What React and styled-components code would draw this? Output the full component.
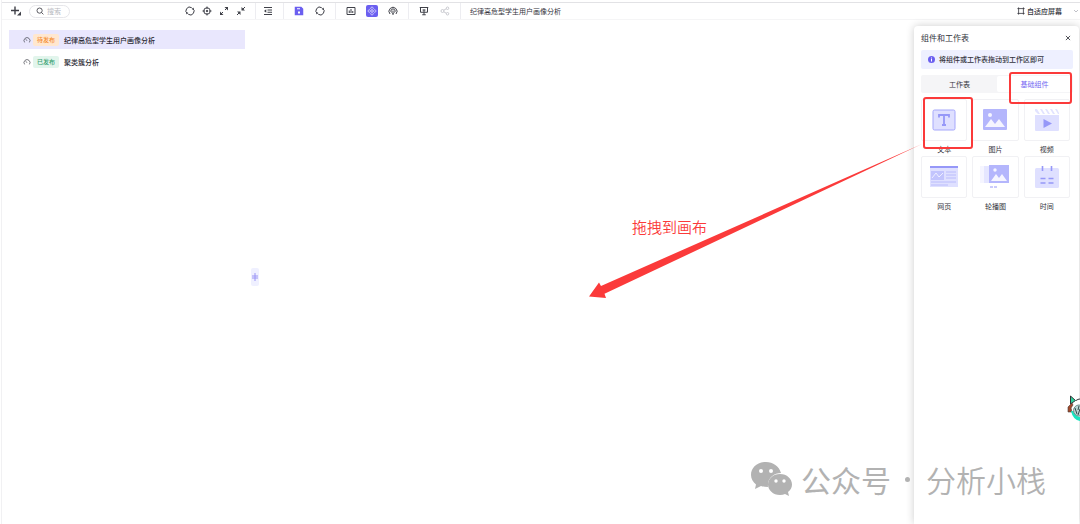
import React from 'react';
import styled, { createGlobalStyle } from 'styled-components';

const GlobalStyle = createGlobalStyle`
  * {
    box-sizing: border-box;
  }

  body {
    margin: 0;
    background: #fff;
    color: #33343c;
    font-family: 'Noto Sans CJK SC', sans-serif;
    font-size: 7px;
    line-height: 10px;
  }

  button,
  input {
    margin: 0;
    padding: 0;
    border: none;
    background: none;
    color: inherit;
    font: inherit;
  }

  svg {
    display: block;
    flex: none;
  }
`;

const Page = styled.div`
  position: relative;
  display: flex;
  flex-direction: column;
  min-height: 100vh;
  margin-left: 1px;
  border-left: 1px solid #f1f1f3;
  padding-top: 2px;
  overflow: hidden;
`;

const Toolbar = styled.header`
  display: flex;
  align-items: center;
  height: 18px;
  border-top: 1px solid #e2e2e5;
  border-bottom: 1px solid #f5f5f6;
`;

const ToolbarStart = styled.div`
  display: flex;
  align-items: center;
  width: 253px;
  padding: 0 8px;
`;

const ToolGroup = styled.div`
  display: flex;
  align-items: center;
  gap: ${({ $gap }) => $gap || 9}px;
  padding: 0 9px 0 ${({ $start }) => $start || 9}px;
  height: 16px;
  border-left: 1px solid #ededf1;
`;

const ToolButton = styled.button`
  display: flex;
  align-items: center;
  justify-content: center;
  width: 12px;
  height: 12px;
  border-radius: 2px;
  color: ${({ $muted }) => ($muted ? '#c9cad0' : '#3f4048')};
  background: ${({ $active }) => ($active ? '#6b5ff0' : 'transparent')};
`;

const QuickTools = styled.div`
  display: flex;
  gap: 5px;
  margin-left: auto;
`;

const SearchBox = styled.label`
  display: flex;
  align-items: center;
  gap: 3px;
  width: 41px;
  height: 13px;
  margin-left: 7px;
  padding-left: 6px;
  border: 1px solid #e6e6ea;
  border-radius: 7px;
`;

const SearchInput = styled.input`
  width: 24px;
  height: 10px;
  outline: none;

  &::placeholder {
    color: #b9bac1;
    opacity: 1;
  }
`;

const ScreenMode = styled.button`
  display: flex;
  align-items: center;
  gap: 2px;
  margin-left: auto;
  font-weight: 500;
`;

const ModeArrow = styled.span`
  margin-left: 8px;
  color: #c0c1c8;
`;

const Workspace = styled.div`
  display: flex;
  flex: 1;
`;

const Sidebar = styled.nav`
  display: flex;
  flex-direction: column;
  gap: 3px;
  width: 249px;
  padding: 10px 6px 0 7px;
`;

const SidebarRow = styled.a`
  display: flex;
  align-items: center;
  width: 236px;
  height: 19px;
  padding-left: 14px;
  color: #292a33;
  font-weight: 500;
  text-decoration: none;
  background: ${({ $selected }) => ($selected ? '#e9e7fd' : 'transparent')};
`;

const Badge = styled.span`
  width: 26px;
  height: 12px;
  margin: 0 5px 0 2px;
  border-radius: 2px;
  font-size: 6px;
  line-height: 12px;
  text-align: center;
  color: ${({ $published }) => ($published ? '#35a070' : '#f58b2e')};
  background: ${({ $published }) => ($published ? '#e2f5ec' : '#ffe7cf')};
`;

const Handle = styled.button`
  display: flex;
  align-items: center;
  justify-content: center;
  align-self: center;
  width: 8px;
  height: 18px;
  margin-top: 9px;
  border-radius: 2px;
  background: #eff0ff;
`;

const Canvas = styled.main`
  position: relative;
  flex: 1;
`;

const Panel = styled.aside`
  width: 165px;
  margin: 6px 1px 0 0;
  padding: 6px 6px 0 7px;
  border-radius: 4px 4px 0 0;
  background: #fff;
  box-shadow: 0 0 9px rgba(0, 0, 0, 0.2);
`;

const PanelHeader = styled.div`
  display: flex;
  align-items: center;
  justify-content: space-between;
  height: 12px;
  padding-right: 2px;
`;

const PanelTitle = styled.h2`
  margin: 0;
  font-size: 8px;
  font-weight: 400;
  line-height: 12px;
`;

const Notice = styled.p`
  display: flex;
  align-items: center;
  gap: 4px;
  height: 19px;
  margin: 6px 0;
  padding: 0 0 1px 7px;
  border-radius: 2px;
  background: #eef0ff;
  font-weight: 500;
`;

const Tabs = styled.div`
  display: flex;
  height: 18px;
  padding: 1px;
  border-radius: 2px;
  background: #f5f5f7;
`;

const Tab = styled.button`
  position: relative;
  flex: 1;
  border-radius: 2px;
  color: ${({ $active }) => ($active ? '#7468f2' : 'inherit')};
  background: ${({ $active }) => ($active ? '#fff' : 'transparent')};
`;

const ComponentGrid = styled.div`
  display: grid;
  grid-template-columns: repeat(3, 1fr);
  gap: 2px 5px;
  padding: 6px 3px 0 0;
`;

const ComponentItem = styled.button`
  position: relative;
  display: flex;
  flex-direction: column;
  height: 55px;
`;

const Thumb = styled.span`
  display: flex;
  align-items: center;
  justify-content: center;
  width: 100%;
  height: 42px;
  border: 1px solid #f1f1f4;
  border-radius: 2px;
`;

const ItemLabel = styled.span`
  width: 100%;
  margin-top: 3px;
  text-align: center;
`;

const Highlight = styled.span`
  position: absolute;
  inset: ${({ $inset }) => $inset};
  z-index: 1;
  border: 2px solid #fb3a3a;
  border-radius: 3px;
`;

const ArrowDrawing = styled.svg`
  position: absolute;
  top: 121px;
  right: -10px;
  z-index: 1;
  pointer-events: none;
`;

const ArrowText = styled.span`
  position: absolute;
  top: 196px;
  right: 207px;
  color: #fb3a3a;
  font-size: 15px;
  font-weight: 350;
  line-height: 22px;
`;

const Watermark = styled.div`
  position: absolute;
  right: 34px;
  bottom: 24px;
  z-index: 2;
  display: flex;
  align-items: center;
  gap: 8px;
  color: #b2b2b2;
  font-size: 30px;
  line-height: 42px;
  white-space: nowrap;
  pointer-events: none;
`;

const WatermarkDot = styled.span`
  width: 5px;
  height: 5px;
  margin: 0 8px 0 6px;
  border-radius: 50%;
  background: #b2b2b2;
`;

const WatermarkName = styled.span`
  font-weight: 350;
`;

const Mascot = styled.svg`
  position: absolute;
  right: 0;
  bottom: 101px;
  z-index: 2;
`;

const Icon = ({ size = 10, children }) => (
  <svg
    width={size}
    height={size}
    viewBox="0 0 20 20"
    fill="none"
    stroke="currentColor"
    strokeWidth="2"
    aria-hidden="true"
  >
    {children}
  </svg>
);

const icons = {
  add: (
    <>
      <path d="M8 1v16M0 9h16" strokeWidth="2.8" />
      <path d="M20 11v8h-8z" fill="currentColor" stroke="none" />
    </>
  ),
  refresh: (
    <>
      <path d="M5 15.500A7.300 7.300 0 0 1 13.500 3.500M15 4.500A7.300 7.300 0 0 1 6.500 16.500" />
      <path d="M17.500 3v4h-4zM2.500 17v-4h4z" fill="currentColor" stroke="none" />
    </>
  ),
  target: (
    <>
      <circle cx="10" cy="10" r="6.500" />
      <circle cx="10" cy="10" r="1.500" fill="currentColor" />
      <path d="M10 1v5M10 14v5M1 10h5M14 10h5" />
    </>
  ),
  expand: (
    <>
      <path d="M12 8l4-4M8 12l-4 4" />
      <path d="M11 2h7v7zM9 18H2v-7z" fill="currentColor" stroke="none" />
    </>
  ),
  shrink: (
    <>
      <path d="M18 2l-4 4M2 18l4-4" />
      <path d="M11 2v7h7zM9 18v-7H2z" fill="currentColor" stroke="none" />
    </>
  ),
  indent: (
    <>
      <path d="M2 3h16M9 8h9M9 12.500h9M2 17h16" />
      <path d="M6.500 6.500v7l-4.500-3.500z" fill="currentColor" stroke="none" />
    </>
  ),
  save: (
    <>
      <path d="M3 3h11l3 3v11H3z" fill="#6b5ff0" stroke="#6b5ff0" strokeWidth="3" />
      <path d="M6 5.500h6" stroke="#fff" />
      <path d="M8 11h4v4H8z" fill="#fff" stroke="none" />
    </>
  ),
  chart: <path d="M2 3h16v14H2zM6.500 9v5M10 6v8M13.500 10v4" />,
  widgets: (
    <g stroke="#fff" strokeWidth="1.300">
      <path d="M10 1.500l3 3-3 3-3-3zM10 12.500l3 3-3 3-3-3zM4.500 7l3 3-3 3-3-3zM15.500 7l3 3-3 3-3-3z" />
      <circle cx="10" cy="10" r="1" />
    </g>
  ),
  gauge: (
    <>
      <path d="M4 16a8 8 0 1 1 12 0M7 13a4.200 4.200 0 1 1 6 0" />
      <path d="M10 9v7M8 16h4" />
    </>
  ),
  board: <path d="M1.500 3h17M3 3v9.500h14V3M10 7v10.500M6.500 17.500h7M7 8h6" />,
  share: (
    <>
      <circle cx="5" cy="10" r="3" />
      <circle cx="15" cy="4.500" r="2.500" />
      <circle cx="15" cy="15.500" r="2.500" />
      <path d="M7.500 8.500l5-3M7.500 11.500l5 3" />
    </>
  ),
  search: (
    <>
      <circle cx="9" cy="9" r="6.500" />
      <path d="M14 14l4.500 4.500" />
    </>
  ),
  dial: <path d="M4 16a7.500 7.500 0 1 1 12 0M10 12l-3-4" strokeWidth="1.500" />,
  frame: <path d="M4 1v18M16 1v18M1 4h18M1 16h18" />,
  close: <path d="M3 3l14 14M17 3L3 17" strokeWidth="2.800" />,
};

const TextArt = () => (
  <svg width="24" height="22" viewBox="0 0 24 22">
    <rect x="1" y="1" width="22" height="20" rx="1.500" fill="#dfe0ff" stroke="#a5a7fb" />
    <path d="M7 8.500V6h10v2.500M12 6v10M10 16h4" fill="none" stroke="#9698f8" strokeWidth="1.800" />
  </svg>
);

const ImageArt = () => (
  <svg width="26" height="22" viewBox="0 0 26 22">
    <rect x="1" y="0" width="24" height="21" rx="1" fill="#b4b6fc" />
    <circle cx="8" cy="6" r="2" fill="#f5f5ff" />
    <path d="M3 18l6-8 4 5 4-5 6 8z" fill="#f5f5ff" />
  </svg>
);

const VideoArt = () => (
  <svg width="26" height="22" viewBox="0 0 26 22">
    <path d="M1 6h24v15a1 1 0 0 1-1 1H2a1 1 0 0 1-1-1z" fill="#dfe0ff" />
    <path d="M1 0h2l3 5H4L1 2zM6 0h2l3 5H9zM11 0h2l3 5h-2zM16 0h2l3 5h-2zM21 0h2l2 4v1h-1z" fill="#e2e3ff" />
    <path d="M9.500 10v9L18 14.500z" fill="#9698f8" />
  </svg>
);

const WebArt = () => (
  <svg width="30" height="22" viewBox="0 0 30 22">
    <path d="M1 0h28v21H1z" fill="#dfe0ff" />
    <path d="M1 0h28v2H1z" fill="#9698f8" />
    <path d="M2 5h13v9H2z" fill="#c2c4fd" />
    <path d="M3 12l4-5 3 4 4-4" stroke="#eeeeff" fill="none" />
    <path d="M17 6h10M17 9h10M17 12h10M2 16h25M2 19h17" stroke="#babcfc" />
  </svg>
);

const CarouselArt = () => (
  <svg width="30" height="24" viewBox="0 0 30 24">
    <path d="M0 1h5v17H0z" fill="#f5f5ff" />
    <path d="M4 1h7v17H4z" fill="#e5e6ff" />
    <path d="M9 0h20v18H9z" fill="#b4b6fc" />
    <circle cx="15" cy="5" r="1.700" fill="#f5f5ff" />
    <path d="M11 16l5-7 3 4 3-4 5 7z" fill="#f5f5ff" />
    <path d="M10 22h7" stroke="#9698f8" strokeDasharray="3 1" />
  </svg>
);

const TimeArt = () => (
  <svg width="26" height="24" viewBox="0 0 26 24">
    <rect x="1" y="3" width="24" height="20" rx="1.500" fill="#dfe0ff" />
    <path d="M8.500 1v5M17.500 1v5M6.500 13.500h5M14.500 13.500h5M6.500 18h5M14.500 18h5" stroke="#9698f8" strokeWidth="1.600" />
  </svg>
);

const components = [
  { label: '文本', Art: TextArt, marked: true },
  { label: '图片', Art: ImageArt },
  { label: '视频', Art: VideoArt },
  { label: '网页', Art: WebArt },
  { label: '轮播图', Art: CarouselArt },
  { label: '时间', Art: TimeArt },
];

const Tool = ({ name, label, ...rest }) => (
  <ToolButton type="button" aria-label={label} {...rest}>
    <Icon>{icons[name]}</Icon>
  </ToolButton>
);

const Header = () => (
  <Toolbar>
    <ToolbarStart>
      <Tool name="add" label="新建" />
      <SearchBox>
        <Icon size={8}>{icons.search}</Icon>
        <SearchInput placeholder="搜索" aria-label="搜索" />
      </SearchBox>
      <QuickTools>
        <Tool name="refresh" label="刷新" />
        <Tool name="target" label="定位" />
        <Tool name="expand" label="展开" />
        <Tool name="shrink" label="收起" />
      </QuickTools>
    </ToolbarStart>
    <ToolGroup $start={6}>
      <Tool name="indent" label="目录" />
    </ToolGroup>
    <ToolGroup>
      <Tool name="save" label="保存" />
      <Tool name="refresh" label="重新加载" />
    </ToolGroup>
    <ToolGroup>
      <Tool name="chart" label="图表" />
      <Tool name="widgets" label="组件" $active />
      <Tool name="gauge" label="仪表" />
    </ToolGroup>
    <ToolGroup>
      <Tool name="board" label="预览" />
      <Tool name="share" label="分享" $muted />
    </ToolGroup>
    <ToolGroup>纪律高危型学生用户画像分析</ToolGroup>
    <ScreenMode type="button">
      <Icon size={8}>{icons.frame}</Icon>
      自适应屏幕
      <ModeArrow>
        <svg width="8" height="6" viewBox="0 0 8 6">
          <path d="M2 2l2 2 2-2" fill="none" stroke="currentColor" />
        </svg>
      </ModeArrow>
    </ScreenMode>
  </Toolbar>
);

const Pages = () => (
  <Sidebar>
    <SidebarRow href="#risk" $selected>
      <Icon size={8}>{icons.dial}</Icon>
      <Badge>待发布</Badge>
      纪律高危型学生用户画像分析
    </SidebarRow>
    <SidebarRow href="#cluster">
      <Icon size={8}>{icons.dial}</Icon>
      <Badge $published>已发布</Badge>
      聚类簇分析
    </SidebarRow>
  </Sidebar>
);

const ComponentPanel = () => (
  <Panel>
    <PanelHeader>
      <PanelTitle>组件和工作表</PanelTitle>
      <button type="button" aria-label="关闭">
        <Icon size={6}>{icons.close}</Icon>
      </button>
    </PanelHeader>
    <Notice>
      <svg width="7" height="7" viewBox="0 0 14 14">
        <circle cx="7" cy="7" r="7" fill="#6b5ff0" />
        <path d="M7 3v2M7 6v5" stroke="#fff" strokeWidth="2" />
      </svg>
      将组件或工作表拖动到工作区即可
    </Notice>
    <Tabs role="tablist">
      <Tab type="button" role="tab" aria-selected="false">工作表</Tab>
      <Tab type="button" role="tab" aria-selected="true" $active>
        基础组件
        <Highlight $inset="-4px 0 -12px 12px" />
      </Tab>
    </Tabs>
    <ComponentGrid>
      {components.map(({ label, Art, marked }) => (
        <ComponentItem type="button" key={label}>
          <Thumb>
            <Art />
          </Thumb>
          <ItemLabel>{label}</ItemLabel>
          {marked && <Highlight $inset="-2px -6px 5px 2px" />}
        </ComponentItem>
      ))}
    </ComponentGrid>
  </Panel>
);

const App = () => (
  <>
    <GlobalStyle />
    <Page>
      <Header />
      <Workspace>
        <Pages />
        <Handle type="button" aria-label="收起侧栏">
          <svg width="6" height="8" viewBox="0 0 6 8">
            <path d="M3 0v8M0 3h6M0 5h6" stroke="#9a94f5" />
          </svg>
        </Handle>
        <Canvas>
          <ArrowDrawing width="336" height="160" viewBox="588 141 336 160">
            <path d="M922 144L601 286l-2-3.500-10 14 17 1.500-1.500-4.200z" fill="#fb3a3a" />
          </ArrowDrawing>
          <ArrowText>拖拽到画布</ArrowText>
        </Canvas>
        <ComponentPanel />
      </Workspace>
      <Mascot width="13" height="28" viewBox="0 0 13 28">
        <path d="M3 1l6 4 4-1v18L4 17l-1-6z" fill="#fff" />
        <path d="M3.500 1l5 4.500-5 3.500z" fill="#2ed29a" stroke="#33353a" />
        <path d="M9 5.500q2-1.500 4-1.500" fill="none" stroke="#33353a" />
        <path d="M1 12l4-4 1 2-2 3 1 4H1z" fill="#a24b2c" stroke="#4b3a35" strokeWidth=".6" />
        <path d="M4 16q2 9 9 10v-4q-5-1-6-6z" fill="#18e5c0" />
        <circle cx="12" cy="15.500" r="5.500" fill="#b9d6d4" stroke="#6f8f8f" />
        <path d="M8 13l2 6M12 11l-1 4M13 14l-2 6" stroke="#33494a" />
      </Mascot>
      <Watermark>
        <svg width="43" height="36" viewBox="0 0 43 36">
          <path d="M16 1C7 1 1 7 1 14c0 4 2 7 5 9.500L5 28l6-3q3 1 7 1C17 17 24 12 31 12 29 5 23 1 16 1z" fill="currentColor" />
          <path d="M30 13c-7 0-12 5-12 10.500S23 34 30 34q3 0 5-1l4 2-1-4c2.500-2 4-4.500 4-7.500C42 18 37 13 30 13z" fill="currentColor" />
          <g fill="#fff">
            <circle cx="11" cy="10" r="2" />
            <circle cx="21" cy="10" r="2" />
            <circle cx="26" cy="20" r="1.700" />
            <circle cx="34" cy="20" r="1.700" />
          </g>
        </svg>
        <span>公众号</span>
        <WatermarkDot />
        <WatermarkName>分析小栈</WatermarkName>
      </Watermark>
    </Page>
  </>
);

export default App;
